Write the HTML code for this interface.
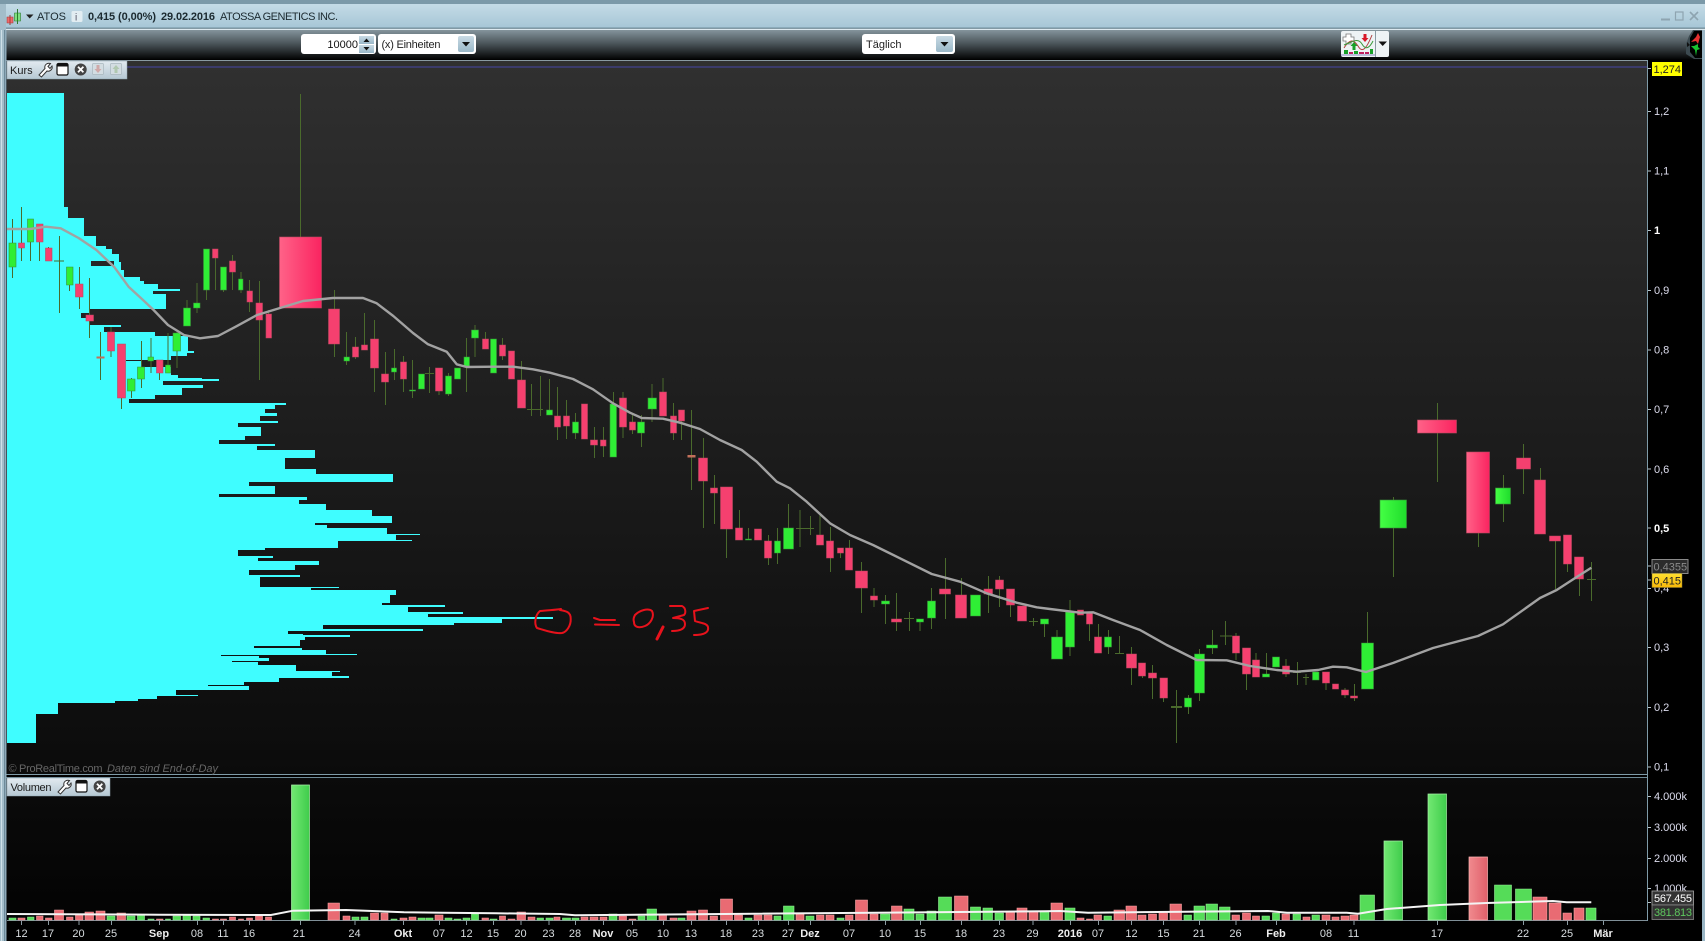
<!DOCTYPE html>
<html><head><meta charset="utf-8"><title>ATOS</title>
<style>html,body{margin:0;padding:0;background:#000;overflow:hidden}svg{display:block}text{font-family:"Liberation Sans",sans-serif;font-size:11px}.b{font-weight:bold}</style></head><body>
<svg xmlns="http://www.w3.org/2000/svg" width="1705" height="941" viewBox="0 0 1705 941">
<defs>
<linearGradient id="tb" x1="0" y1="0" x2="0" y2="1"><stop offset="0" stop-color="#c4dbe6"/><stop offset="1" stop-color="#a6c6d6"/></linearGradient>
<linearGradient id="tool" x1="0" y1="0" x2="0" y2="1"><stop offset="0" stop-color="#84949c"/><stop offset=".45" stop-color="#4b555a"/><stop offset="1" stop-color="#000"/></linearGradient>
<linearGradient id="bg" x1="0" y1="0" x2="0" y2="1"><stop offset="0" stop-color="#303030"/><stop offset="1" stop-color="#0b0b0b"/></linearGradient>
<linearGradient id="vbg" x1="0" y1="0" x2="0" y2="1"><stop offset="0" stop-color="#0b0b0b"/><stop offset="1" stop-color="#030303"/></linearGradient>
<linearGradient id="box" x1="0" y1="0" x2="0" y2="1"><stop offset="0" stop-color="#e2eaf0"/><stop offset="1" stop-color="#b5c8d3"/></linearGradient>
<linearGradient id="bigp" x1="0" y1="0" x2="1" y2="0"><stop offset="0" stop-color="#ff6288"/><stop offset="1" stop-color="#fa2460"/></linearGradient>
<linearGradient id="bigg" x1="0" y1="0" x2="1" y2="0"><stop offset="0" stop-color="#44ff44"/><stop offset="1" stop-color="#1fdc2c"/></linearGradient>
<linearGradient id="vg" x1="0" y1="0" x2="1" y2="0"><stop offset="0" stop-color="#72e872"/><stop offset="1" stop-color="#3fcc4c"/></linearGradient>
<linearGradient id="vp" x1="0" y1="0" x2="1" y2="0"><stop offset="0" stop-color="#f08a8e"/><stop offset="1" stop-color="#e0606a"/></linearGradient>
<linearGradient id="btn" x1="0" y1="0" x2="0" y2="1"><stop offset="0" stop-color="#c8dae4"/><stop offset="1" stop-color="#9ab8c8"/></linearGradient>
<linearGradient id="gold" x1="0" y1="0" x2="0" y2="1"><stop offset="0" stop-color="#ffe030"/><stop offset="1" stop-color="#f8b808"/></linearGradient>
</defs>
<rect width="1705" height="941" fill="#000"/>
<!-- title bar -->
<rect x="0" y="0" width="1705" height="4" fill="#7b99a8"/>
<rect x="0" y="4" width="1705" height="24" fill="url(#tb)"/>
<rect x="0" y="27.5" width="1705" height="1.2" fill="#6f8f9e"/>
<rect x="0" y="28.7" width="1705" height="1.3" fill="#dce9ef"/>
<rect x="6" y="30" width="1696" height="30" fill="url(#tool)"/>
<!-- chart bg -->
<rect x="7" y="60" width="1640" height="714" fill="url(#bg)"/>
<rect x="7" y="777" width="1640" height="143" fill="url(#vbg)"/>
<rect x="6" y="60" width="1641" height="1" fill="#8a9aa2"/>
<rect x="6" y="774" width="1641" height="1" fill="#7f9ba8"/>
<rect x="6" y="777" width="1641" height="1" fill="#6f8b98"/>
<rect x="7" y="920" width="1640" height="1" fill="#7f8f98"/>
<rect x="1647" y="60" width="1" height="861" fill="#7f9ba8"/>
<!-- frame -->
<rect x="0" y="4" width="6" height="937" fill="#a3bdca"/>
<rect x="1" y="30" width="1" height="911" fill="#cfe0e8"/>
<rect x="4" y="30" width="1" height="911" fill="#6d8a99"/>
<rect x="5" y="30" width="1.5" height="911" fill="#8eaaba"/>
<rect x="1702" y="30" width="3" height="911" fill="#9ab6c5"/>
<!-- profile -->
<path fill="#3ffdff" d="M7 93H64V207H68V218H84V236H96V246H106V249H112V254H119V262H121V270H124V277H140V281H144V284H158V289H180V291H153V294H166V309H90V313H81V318H89V325H121V327H104V332H155V336H188V351H194V353H187V356H171V360H141V367H171V375H178V378H202V379H219V381H163V385H203V388H182V395H155V399H129V403H286V405H275V409H265V413H277V416H260V421H278V423H238V427H261V436H245V440H219V444H275V446H257V450H315V458H285V469H316V474H393V482H249V486H275V494H219V497H307V500H299V504H326V510H372V516H392V523H315V525H327V528H387V534H420V535H396V540H412V541H338V548H265V550H238V556H273V558H258V561H319V565H295V570H249V575H300V577H260V587H339V588H311V590H396V595H390V603H382V605H445V607H408V612H463V614H428V617H553V619H502V623H454V625H323V629H423V631H288V634H303V635H350V637H305V640H300V646H254V648H302V650H326V654H357V655H221V656H259V658H269V661H232V662H258V665H296V671H340V672H332V676H349V678H279V682H244V685H208V686H249V690H176V695H198V696H157V699H138V701H115V703H58V714H36V743H7Z"/>
<path fill="#262626" d="M91 261H114V266H91z"/>
<path fill="#1e1e1e" d="M126 360H141V361H126z"/>
<!-- blue line -->
<rect x="127" y="66.5" width="1520" height="1" fill="#4646a6"/>
<!-- wicks -->
<path fill="none" stroke="#4a6a2c" stroke-width="1" d="M12.5 219V278M21.5 207V261M30.5 219V261M39.5 224V261M48.5 247V261M59.5 236V313M54 261H64M69.5 267V291M79.5 267V309M89.5 278V338M100.5 332V380M111 327V357M121.5 344V409M131.5 378V398M141.5 341V388M151 338V373M159.5 360V380M168 333V373M177 332V368M187 300V326M197 283V313M206.5 249V300M215.5 249V290M223.5 267V292M232.5 255V290M241 272V293M249.5 280V312M259.5 281V380M268.5 310V338M300.5 94V237M334.5 290V357M346.5 332V365M355.5 337V359M364.5 313V350M374.5 320V392M385.5 352V405M394.5 349V380M403.5 356V392M412.5 360V398M429.5 367V393M425 373.5H434M439 368V395M448.5 373V396M466.5 338V392M475 325V357M485.5 332V349M502.5 338V360M521.5 361V408M531.5 384V416M540.5 376V416M527 409.5H543M549.5 379V415M557.5 387V440M566.5 400V439M575.5 413V439M594.5 427V458M603.5 427V457M613.5 392V457M623 392V438M632.5 415V434M641.5 415V447M652 384V422M663 378V416M673.5 403V440M681.5 410V440M691.5 410V490M703.5 438V528M714.5 475V524M726.5 487V558M739.5 510V540M748.5 528V540M768.5 535V565M777.5 528V564M788.5 504V549M800 510V547M810.5 516V535M796 528.5H814M820 515V545M830.5 527V572M840.5 548V558M849.5 540V570M861.5 562V613M874 588V607M885.5 595V624M896.5 593V631M909.5 612V631M904 618.5H914M920 619V631M931.5 588V629M945.5 558V619M961.5 578V595M988.5 576V613M999.5 576V607M1010.5 589V617M1033.5 618V626M1029 621.5H1038M1044.5 619V637M1057 630V659M1070 600V656M1089.5 612V641M1098.5 624V653M1108.5 630V654M1119.5 636V653M1115 653.5H1124M1131.5 647V685M1142.5 663V678M1152.5 665V699M1163.5 678V702M1176.5 690V743M1188.5 695V714M1199.5 649V701M1212.5 630V654M1225.5 621V645M1220 636H1232M1236 633V660M1246.5 648V690M1256 653V677M1266.5 653V677M1286 659V677M1297.5 662V685M1293 672.5H1301M1306 674V685M1303 677.5H1309M1326 672V690M1345 688V698M1354.5 684V701M1367.5 612V643M1393.5 497V577M1437.5 403V482M1478.5 533V547M1503.5 475V522M1523.5 444V494M1540.5 468V480M1555.5 541V589M1567.5 564V572M1579.5 579V596M1591.5 562V601M1587 579.5H1596"/>
<path fill="none" stroke="#4a6a2c" stroke-width="2" d="M1171 707H1182"/>
<!-- pink bodies -->
<path fill="#f5406f" stroke="#b84a60" stroke-width=".6" d="M18.5 243H24.5V248H18.5zM36.5 224H43V242H36.5zM45.5 248H52V261H45.5zM75.5 284H83V297H75.5zM86 315H93.5V321H86zM107.5 332H114.5V351H107.5zM117.5 344H125.5V398H117.5zM156.5 360H163V373H156.5zM212.5 249H218V258H212.5zM229.5 261H235.5V272H229.5zM247 291H252.5V302H247zM256 303H262.5V320H256zM266 314H271.5V338H266zM328.5 309H339.5V344H328.5zM352.5 347H358.5V357H352.5zM361.5 345H367.5V350H361.5zM370.5 339H378.5V368H370.5zM381.5 374H388.5V382H381.5zM400.5 362H406.5V379H400.5zM435.5 368H442.5V391H435.5zM482.5 339H488.5V349H482.5zM499.5 345H505.5V356H499.5zM508.5 351H514.5V379H508.5zM517.5 380H525.5V408H517.5zM554.5 416H560.5V427H554.5zM563.5 416H569.5V426H563.5zM581.5 404H587.5V439H581.5zM590.5 440H597.5V445H590.5zM600.5 440H606V446H600.5zM619.5 398H626.5V427H619.5zM629.5 422H635.5V430H629.5zM659.5 392H666.5V416H659.5zM670.5 416H676.5V433H670.5zM678.5 410H684.5V421H678.5zM698.5 458H707.5V481H698.5zM710.5 488H717.5V493H710.5zM720.5 487H732.5V529H720.5zM735.5 528H742.5V540H735.5zM754.5 529H761.5V540H754.5zM764.5 541H771.5V558H764.5zM816.5 535H823.5V545H816.5zM826.5 541H833.5V558H826.5zM837.5 548H843.5V553H837.5zM845.5 548H852.5V570H845.5zM855.5 571H867.5V588H855.5zM870.5 596H877.5V600H870.5zM891.5 619H901.5V622H891.5zM939.5 589H950.5V594H939.5zM955.5 595H966.5V618H955.5zM984 589H992.5V594H984zM995.5 580H1003.5V589H995.5zM1006.5 589H1014.5V605H1006.5zM1017.5 606H1026.5V621H1017.5zM1077.5 610H1083.5V615H1077.5zM1086.5 612H1092.5V624H1086.5zM1094.5 637H1101.5V653H1094.5zM1126.5 654H1136.5V668H1126.5zM1138.5 663H1145.5V676H1138.5zM1148.5 673H1156.5V678H1148.5zM1160 678H1167.5V698H1160zM1232.5 636H1239.5V653H1232.5zM1242.5 648H1250.5V674H1242.5zM1252.5 660H1259.5V677H1252.5zM1282.5 666H1289.5V674H1282.5zM1322.5 672H1329.5V683H1322.5zM1332.5 684H1338.5V689H1332.5zM1341.5 690H1348.5V695H1341.5zM1350.5 696H1357.5V698H1350.5zM1534.5 480H1545.5V534H1534.5zM1549.5 536H1560.5V541H1549.5zM1563.5 535H1571.5V564H1563.5zM1574.5 557H1583.5V579H1574.5zM1516.5 458H1530.5V469H1516.5z"/>
<rect x="279.5" y="237" width="42" height="71" fill="url(#bigp)" stroke="#b84a60" stroke-width=".6"/>
<rect x="1417.5" y="420" width="39" height="13" fill="url(#bigp)" stroke="#b84a60" stroke-width=".6"/>
<rect x="1466.5" y="452" width="23" height="81" fill="url(#bigp)" stroke="#b84a60" stroke-width=".6"/>
<path fill="#c2705a" d="M96.5 356.5H104.5V358.5H96.5zM687.5 455H695.5V457.5H687.5z"/>
<!-- green bodies -->
<path fill="#2fee35" stroke="#3a8f3a" stroke-width=".6" d="M9 243H16V267H9zM27.5 219H33.5V242H27.5zM66.5 267H73V285H66.5zM127.5 379H135V391H127.5zM137.5 367H144.5V379H137.5zM148 357H153.5V361H148zM165.5 365H170.5V373H165.5zM173 333H180.5V351H173zM183.5 308H190.5V326H183.5zM193.5 303H200V308H193.5zM203.5 249H209.5V290H203.5zM220.5 267H226.5V290H220.5zM238.5 279H243V290H238.5zM344 357H349.5V361H344zM391.5 368H396.5V372H391.5zM409.5 390H415.5V391H409.5zM418.5 374H424.5V389H418.5zM445.5 376H451.5V394H445.5zM454.5 368H460.5V379H454.5zM464 357H469.5V367H464zM471.5 330H478.5V338H471.5zM490.5 339H496.5V373H490.5zM546.5 410H552.5V415H546.5zM572.5 422H578.5V433H572.5zM610 404H616.5V457H610zM637.5 422H644.5V433H637.5zM648 398H656.5V409H648zM745.5 539H751.5V540H745.5zM774.5 541H780.5V553H774.5zM783.5 528H793.5V549H783.5zM881.5 601H889.5V604H881.5zM916.5 619H923.5V622H916.5zM927.5 601H935.5V618H927.5zM970.5 595H980.5V616H970.5zM1040.5 619H1048.5V624H1040.5zM1051.5 637H1062.5V659H1051.5zM1065.5 612H1074.5V647H1065.5zM1104.5 637H1111.5V647H1104.5zM1184.5 698H1191.5V707H1184.5zM1194.5 654H1204.5V693H1194.5zM1206.5 645H1217.5V648H1206.5zM1262.5 674H1269.5V677H1262.5zM1272.5 657H1279.5V667H1272.5zM1312.5 672H1319V680H1312.5zM1361.5 643H1373.5V689H1361.5z"/>
<rect x="1380" y="500" width="26.5" height="28" fill="url(#bigg)" stroke="#3a8f3a" stroke-width=".6"/>
<rect x="1495.5" y="488" width="15" height="16" fill="url(#bigg)" stroke="#3a8f3a" stroke-width=".6"/>
<!-- MA -->
<polyline fill="none" stroke="#a2a2a2" stroke-width="2.4" stroke-linejoin="round" points="7,229 30,229 46,226.7 60.7,228.3 78.6,238 96.4,250 114,266.7 128.6,286.7 143,300 153.6,310 168,325 184,335 200,338.3 218,336 235.7,326.7 257,315 280,308 303,301 333,298 363,298 376.7,303.3 393.3,316 413,333 428,344.3 446.7,351.7 456.7,364.3 466.7,367 493,366.7 513,366.7 533,369.3 550,372.7 573,379 593,389.3 613,403.3 630,412.7 641.7,418 663,418.7 680,422.7 700,429 720,440 741.7,450 756.7,461.7 776.7,481.7 790,488.3 806.7,501.7 830,523.3 850,535 873,545 900,558.3 931.7,574 960,581.7 986.7,593.3 1016.7,602.7 1036.7,607.3 1050,609 1080,612.7 1093,612.3 1113,620 1140,630 1166.7,645 1196.7,660 1226.7,660.3 1250,666 1276.7,670 1296.7,671.7 1318,670 1333,666.7 1346.7,667.3 1366,672 1393,663 1433,648 1478,636 1503,624.3 1540,598 1556.7,590 1576.7,577 1591.3,567.7"/>
<!-- red drawing -->
<g fill="none" stroke="#e8121c" stroke-width="2" stroke-linecap="round" stroke-linejoin="round">
<path d="M540 611C548 610 556 610 561 609L560 610C566 611 571 612 570.7 619C571 625 567 632 562 633C555 634 544 630 537 628C534 624 535 615 540 611"/>
<path d="M594 618L600 620H615M595 624.5L619 625"/>
<path d="M635 615C640 610 648 608 652 611C655 617 650 624 645 626C640 628 634 628 634 622C633 619 634 617 635 615"/>
<path d="M670 606H682C686 608 686 613 684 615L673 618C680 618 685 619 685 624C685 629 680 631 672 631"/>
<path d="M708 608L694 611L695 621C700 623 707 623 708 627C709 632 705 635 694 635"/>
</g>
<path d="M663 627L657 639" stroke="#e8121c" stroke-width="3" stroke-linecap="round"/>
<!-- volume bars -->
<path fill="url(#vg)" stroke="#a8f0a8" stroke-width=".7" d="M291.5 785H309.5V920H291.5z"/>
<path fill="url(#vg)" stroke="#a8f0a8" stroke-width=".7" d="M1384 841H1402.5V920H1384z"/>
<path fill="url(#vg)" stroke="#a8f0a8" stroke-width=".7" d="M1428 794H1446.5V920H1428z"/>
<path fill="url(#vp)" stroke="#ffb4b4" stroke-width=".7" d="M1469 857H1487.5V920H1469z"/>
<path fill="#55dc58" stroke="#98ec98" stroke-width=".6" d="M9 918H16V920H9zM27.5 917H34V920H27.5zM107 916H115V920H107zM127 916H135V920H127zM137.5 915H144.5V920H137.5zM148 919H154V920H148zM165.5 919H170.5V920H165.5zM173 916H180.5V920H173zM183 915H190.5V920H183zM193 916H200V920H193zM203 918H209.5V920H203zM352 917H359V920H352zM361 917H368V920H361zM391 919H397V920H391zM418 918H425V920H418zM426 918H433V920H426zM445 918H452V920H445zM454 919H461V920H454zM463 918H470V920H463zM471.5 914H478.5V920H471.5zM490 919H497V920H490zM537 918H543.5V920H537zM546 918H553V920H546zM562.5 918H570.5V920H562.5zM572 918H579V920H572zM609 914H617V920H609zM638 916H645V920H638zM647 909H656.5V920H647zM678 918H685V920H678zM745 918H752V920H745zM774 916H781V920H774zM783.5 906H794V920H783.5zM806 916H814V920H806zM837 918H844V920H837zM880.5 914H890V920H880.5zM904 909H914V920H904zM916 914H924V920H916zM927 911H936V920H927zM938.5 897H951.5V920H938.5zM970.5 907H980.5V920H970.5zM983 908H992.5V920H983zM995 913H1003.5V920H995zM1040 912H1049V920H1040zM1065 908H1075V920H1065zM1104 916H1111.5V920H1104zM1184 915H1191.5V920H1184zM1194 906H1204.5V920H1194zM1206 904H1217.5V920H1206zM1219.5 907H1230V920H1219.5zM1262 916H1269.5V920H1262zM1272.5 913H1279.5V920H1272.5zM1293 914H1300.5V920H1293zM1312 915H1319.5V920H1312zM1360 895H1374.5V920H1360zM1494.5 885H1511.5V920H1494.5zM1515.5 889H1531.5V920H1515.5zM1586 908H1596V920H1586z"/>
<path fill="#e96b73" stroke="#f8a8a8" stroke-width=".6" d="M18 918H25V920H18zM36.5 916H43V920H36.5zM45.5 918H52V920H45.5zM54.5 910H63.5V920H54.5zM66.5 917H73V920H66.5zM75.5 915H83V920H75.5zM85 912H93.5V920H85zM96 911H105V920H96zM117 913H125.5V920H117zM156.5 919H163V920H156.5zM212.5 919H218.5V920H212.5zM220.5 919H226.5V920H220.5zM229.5 917H235.5V920H229.5zM238.5 919H243.5V920H238.5zM246.5 918H252.5V920H246.5zM255.5 916H262.5V920H255.5zM265.5 917H271.5V920H265.5zM328 903H339.5V920H328zM343 916H350V920H343zM370.5 913H378.5V920H370.5zM381 913H388V920H381zM400 918H407V920H400zM409 917H416V920H409zM435 915H443V920H435zM482 918H488.5V920H482zM499.5 916H505.5V920H499.5zM508 919H515V920H508zM517 912H525.5V920H517zM528 917H535V920H528zM554 917H560V920H554zM581 917H588V920H581zM590 917H598V920H590zM600 917H607V920H600zM619 916H626.5V920H619zM629 919H636V920H629zM659 914H666.5V920H659zM670 918H677V920H670zM687 911H696V920H687zM698.5 910H707.5V920H698.5zM710 916H717.5V920H710zM720.5 899H732.5V920H720.5zM734.5 915H742.5V920H734.5zM754 915H762V920H754zM764 915H772V920H764zM796 914H804V920H796zM816.5 915H824V920H816.5zM826 915H834V920H826zM845.5 915H853V920H845.5zM855.5 900H867.5V920H855.5zM870 914H878V920H870zM891.5 906H902V920H891.5zM954.5 896H968V920H954.5zM1006 912H1014.5V920H1006zM1017 908H1027V920H1017zM1029 911H1038V920H1029zM1051 903H1062.5V920H1051zM1077 918H1084V920H1077zM1086.5 919H1092.5V920H1086.5zM1094 915H1101.5V920H1094zM1114 910H1124.5V920H1114zM1126 906H1136.5V920H1126zM1138 915H1146V920H1138zM1148.5 914H1156.5V920H1148.5zM1159 912H1167.5V920H1159zM1170 904H1181.5V920H1170zM1232 915H1239.5V920H1232zM1242.5 913H1250.5V920H1242.5zM1252.5 916H1259.5V920H1252.5zM1282 914H1289.5V920H1282zM1303 917H1310V920H1303zM1322 915H1330V920H1322zM1332 917H1339V920H1332zM1341 916H1349V920H1341zM1350 915H1358V920H1350zM1533 897H1547V920H1533zM1549 903H1561V920H1549zM1563 913H1571.5V920H1563zM1574 908H1584V920H1574z"/>
<polyline fill="none" stroke="#f4f4f4" stroke-width="2" points="7,914 160,914.7 271,915 293,910.7 346,910 404,912.3 443,912.7 496,913.3 560,914 575,915.3 754,913.7 1045,911.3 1060,911 1088,912.7 1268,911 1287,912.7 1346.7,912.7 1358,913.7 1386.7,909 1440,905 1486.7,903 1553,901 1566.7,902.3 1591.3,902.3"/>
<!-- title -->
<path fill="#f06a6a" stroke="#a03a3a" stroke-width=".6" d="M7 17H13V23H7z"/><path stroke="#a03a3a" d="M10 15V25"/>
<path fill="#7fe07f" stroke="#2a7a2a" stroke-width=".6" d="M14.5 13H20.5V21H14.5z"/><path stroke="#2a7a2a" d="M17.5 9V24"/>
<path fill="#222" d="M26 14.5H33.5L29.7 18.5z"/>
<text x="37" y="20" fill="#1c2a30" textLength="29">ATOS</text>
<rect x="71.5" y="11" width="11" height="11" rx="1.5" fill="#e2edf2"/><text x="75" y="20.5" fill="#556" style="font-size:10px">i</text>
<text x="88" y="20" class="b" fill="#1c2a30" textLength="68">0,415 (0,00%)</text>
<text x="161" y="20" class="b" fill="#1c2a30" textLength="54">29.02.2016</text>
<text x="220" y="20" fill="#1c2a30" textLength="118">ATOSSA GENETICS INC.</text>
<!-- window controls -->
<rect x="1661" y="18.5" width="9" height="2" fill="#8ea4b0"/>
<rect x="1675.5" y="12" width="7.5" height="8" fill="none" stroke="#8ea4b0" stroke-width="1.2"/>
<path d="M1690 12L1698 20M1698 12L1690 20" stroke="#8ea4b0" stroke-width="1.6"/>
<!-- toolbar controls -->
<rect x="301" y="34" width="75" height="20" rx="3" fill="#fff"/>
<text x="358" y="48" text-anchor="end" fill="#111">10000</text>
<rect x="359" y="36" width="15" height="8" fill="url(#btn)"/><rect x="359" y="45" width="15" height="8" fill="url(#btn)"/>
<path fill="#111" d="M363.5 42L366.5 38.5L369.5 42zM363.5 47L366.5 50.5L369.5 47z"/>
<rect x="378" y="34" width="98" height="20" rx="3" fill="#fff"/>
<text x="381.5" y="48" fill="#222" textLength="59">(x) Einheiten</text>
<rect x="458" y="36" width="16" height="16" rx="2" fill="url(#btn)"/>
<path fill="#111" d="M462 42H470L466 46.5z"/>
<rect x="862" y="34" width="93" height="20" rx="3" fill="#fff"/>
<text x="866" y="48" fill="#222">Täglich</text>
<rect x="936" y="36" width="17" height="16" rx="2" fill="url(#btn)"/>
<path fill="#111" d="M940.5 42H948.5L944.5 46.5z"/>
<rect x="1341" y="31" width="48" height="26" rx="2" fill="#eef3f5"/>
<rect x="1375" y="31" width="1" height="26" fill="#8a9aa2"/>
<path fill="#111" d="M1378.5 41.5H1387L1382.7 46z"/>
<path d="M1343 37H1346V34H1351V37H1354V41H1351V44H1346V41H1343z" fill="#fff" stroke="#777" stroke-width=".8"/>
<path d="M1344 48C1350 38 1354 40 1358 46C1362 53 1366 50 1372 35" fill="none" stroke="#b04040" stroke-width="1"/>
<path d="M1344 45C1352 42 1358 37 1362 44C1366 51 1370 47 1373 41" fill="none" stroke="#3a9a3a" stroke-width="1"/>
<path fill="#d81828" d="M1363.5 34H1366.5V38H1368.5L1365 42L1361.5 38H1363.5z"/>
<path fill="#18a028" d="M1352.5 50V46H1350.5L1354 42L1357.500 46H1355.500V50z"/>
<path fill="#18a028" d="M1344 50H1348V54H1344zM1354 51H1358V54H1354zM1370 49H1373V54H1370z"/>
<path fill="#c02060" d="M1349 52H1353V54H1349zM1359 52H1364V54H1359zM1365 52H1369V54H1365z"/>
<rect x="1341" y="54.5" width="34" height="1" fill="#8888c0"/>
<!-- right icon -->
<path fill="#3c4a50" d="M1693 30H1702V59H1694L1686 54V44L1689 36z"/><path fill="#000" d="M1694 31H1702V58H1695L1690 52V38z"/>
<path fill="#e83030" d="M1698 33L1696 37L1691 42L1696 41L1698 44L1700 37z"/>
<path fill="#18c030" d="M1691 46L1694 46L1698 44L1698 47L1700 49L1697 50L1696 56L1695 50z"/>
<path fill="#111" d="M1687 42L1690 45L1687 47z"/>
<!-- Kurs box -->
<rect x="7" y="61" width="120" height="18" fill="url(#box)" stroke="#8fa3ae" stroke-width=".5"/>
<text x="10" y="74" fill="#1a1a1a">Kurs</text>
<path d="M39 75L45 68.5C44 65 47 62.5 50.5 63.5L48 66.5L50 68.5L52 66C53 69 50 72 47 71L41.5 77z" fill="#fff" stroke="#333" stroke-width="1"/>
<rect x="57" y="63.5" width="11" height="11.5" rx="1.5" fill="#fff" stroke="#111" stroke-width="1.2"/><rect x="57" y="63.5" width="11" height="3" fill="#111"/>
<circle cx="80.7" cy="69.5" r="6" fill="#444"/><path d="M78 66.8L83.4 72.2M83.4 66.8L78 72.2" stroke="#fff" stroke-width="1.8"/>
<rect x="92.5" y="63.5" width="11" height="11" rx="1" fill="#d3dde2" stroke="#a8b6bd" stroke-width=".7"/><path fill="#cfa8a8" d="M96.5 65H99.5V69H101.5L98 73L94.5 69H96.5z"/>
<rect x="110.5" y="63.5" width="11" height="11" rx="1" fill="#d3dde2" stroke="#a8b6bd" stroke-width=".7"/><path fill="#b0c8b0" d="M114.5 73H117.5V69H119.5L116 65L112.5 69H114.5z"/>
<!-- Volumen box -->
<rect x="7" y="778" width="103" height="18" fill="url(#box)" stroke="#8fa3ae" stroke-width=".5"/>
<text x="10.500" y="791" fill="#1a1a1a" textLength="41">Volumen</text>
<path d="M58 792L64 785.5C63 782 66 779.5 69.5 780.5L67 783.5L69 785.5L71 783C72 786 69 789 66 788L60.5 794z" fill="#fff" stroke="#333" stroke-width="1"/>
<rect x="76" y="780.5" width="11" height="11.5" rx="1.5" fill="#fff" stroke="#111" stroke-width="1.2"/><rect x="76" y="780.5" width="11" height="3" fill="#111"/>
<circle cx="99.6" cy="786.5" r="6" fill="#444"/><path d="M97 783.8L102.3 789.2M102.3 783.8L97 789.2" stroke="#fff" stroke-width="1.8"/>
<!-- watermark -->
<text x="8.500" y="772" fill="#666" textLength="94">© ProRealTime.com</text>
<text x="107" y="772" fill="#666" font-style="italic" textLength="111">Daten sind End-of-Day</text>
<!-- price axis -->
<path stroke="#b8c4ca" d="M1648 68.5H1651M1648 111.5H1651M1648 171H1651M1648 230.5H1651M1648 290.5H1651M1648 350H1651M1648 409.5H1651M1648 469H1651M1648 528H1651M1648 566H1651M1648 580H1651M1648 588.5H1651M1648 647.5H1651M1648 707.5H1651M1648 767H1651M1648 796.5H1651M1648 827.5H1651M1648 858.5H1651M1648 888.5H1651M1648 902.5H1651"/>
<g fill="#dde">
<text x="1654" y="115">1,2</text><text x="1654" y="174.5">1,1</text><text x="1654" y="234" class="b" fill="#fff">1</text><text x="1654" y="294">0,9</text><text x="1654" y="353.5">0,8</text><text x="1654" y="413">0,7</text><text x="1654" y="473">0,6</text><text x="1654" y="532" class="b" fill="#fff">0,5</text><text x="1654" y="592">0,4</text><text x="1654" y="651">0,3</text><text x="1654" y="711">0,2</text><text x="1654" y="770.5">0,1</text>
<text x="1654" y="800">4.000k</text><text x="1654" y="831">3.000k</text><text x="1654" y="862">2.000k</text><text x="1654" y="892">1.000k</text>
</g>
<rect x="1652" y="62" width="30" height="14" fill="#ffff00"/><text x="1653.5" y="73" fill="#222">1,274</text>
<rect x="1652" y="559.5" width="36" height="14" fill="#2c2c2c" stroke="#8a8a8a"/><text x="1653.5" y="570.5" fill="#8a8a8a">0,4355</text>
<rect x="1652" y="573.5" width="30" height="14" fill="url(#gold)" stroke="#8a7a30" stroke-width=".5"/><text x="1653.5" y="584.5" fill="#222">0,415</text>
<rect x="1652" y="891" width="41.5" height="14" fill="#333" stroke="#aaa" stroke-width=".8"/><text x="1654" y="902" fill="#fff" textLength="38">567.455</text>
<rect x="1652" y="905" width="41.5" height="14.5" fill="#333" stroke="#888" stroke-width=".8"/><text x="1654" y="916" fill="#5ec85e" textLength="38">381.813</text>
<!-- time ticks -->
<path stroke="#8a9aa2" d="M21.5 921V925M48.5 921V925M79 921V925M111.5 921V925M159.5 921V925M197.5 921V925M223.5 921V925M249.5 921V925M300.5 921V925M355 921V925M403.5 921V925M439.5 921V925M466.5 921V925M493.5 921V925M521 921V925M549 921V925M575.5 921V925M603.5 921V925M632.5 921V925M663.5 921V925M691.5 921V925M726.5 921V925M758.5 921V925M788.5 921V925M810.5 921V925M849.5 921V925M885.5 921V925M920.5 921V925M961.5 921V925M999.5 921V925M1033 921V925M1070.5 921V925M1098.5 921V925M1131.5 921V925M1163.5 921V925M1199.5 921V925M1236 921V925M1276.5 921V925M1326.5 921V925M1354 921V925M1437.5 921V925M1523.5 921V925M1567.5 921V925M1603.5 921V925"/>
<g fill="#d8dde0" text-anchor="middle">
<text x="21.5" y="937">12</text><text x="48" y="937">17</text><text x="78.5" y="937">20</text><text x="111" y="937">25</text><text x="159" y="937" class="b" fill="#eee">Sep</text><text x="197" y="937">08</text><text x="223" y="937">11</text><text x="249" y="937">16</text><text x="299" y="937">21</text><text x="354.5" y="937">24</text><text x="403" y="937" class="b" fill="#eee">Okt</text><text x="439" y="937">07</text><text x="466.5" y="937">12</text><text x="493" y="937">15</text><text x="520.5" y="937">20</text><text x="548.5" y="937">23</text><text x="575" y="937">28</text><text x="603" y="937" class="b" fill="#eee">Nov</text><text x="632" y="937">05</text><text x="663" y="937">10</text><text x="691" y="937">13</text><text x="726" y="937">18</text><text x="758" y="937">23</text><text x="788" y="937">27</text><text x="810" y="937" class="b" fill="#eee">Dez</text><text x="849" y="937">07</text><text x="885" y="937">10</text><text x="920" y="937">15</text><text x="961" y="937">18</text><text x="999" y="937">23</text><text x="1032.5" y="937">29</text><text x="1070" y="937" class="b" fill="#eee">2016</text><text x="1098" y="937">07</text><text x="1131.5" y="937">12</text><text x="1163.5" y="937">15</text><text x="1199" y="937">21</text><text x="1235.5" y="937">26</text><text x="1276" y="937" class="b" fill="#eee">Feb</text><text x="1326" y="937">08</text><text x="1353.5" y="937">11</text><text x="1437" y="937">17</text><text x="1523" y="937">22</text><text x="1567" y="937">25</text><text x="1603" y="937" class="b" fill="#eee">Mär</text>
</g>
</svg>
</body></html>
